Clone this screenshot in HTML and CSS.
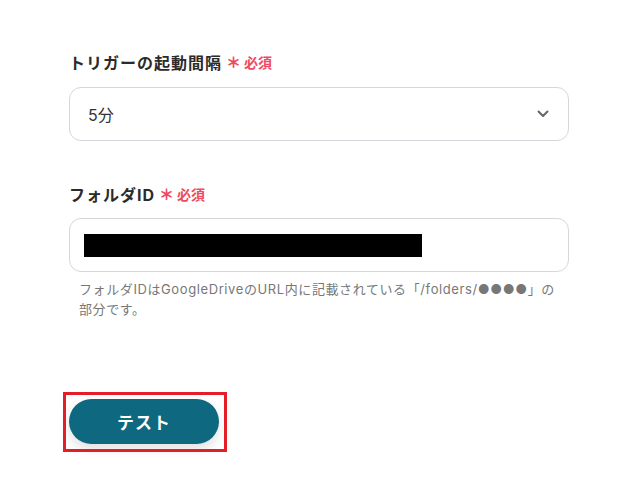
FILE: index.html
```html
<!DOCTYPE html>
<html lang="ja">
<head>
<meta charset="utf-8">
<link rel="stylesheet" href="styles.css">
</head>
<body>
<div class="form">
  <div class="field field-first">
    <div class="label">トリガーの起動間隔<span class="req"><span class="ast">＊</span>必須</span></div>
    <div class="select">
      <span class="value">5分</span>
      <svg class="chev" width="12" height="8" viewBox="0 0 12 8"><path d="M1.5 1.5 L6 6 L10.5 1.5" fill="none" stroke="#666" stroke-width="2" stroke-linecap="round" stroke-linejoin="round"/></svg>
    </div>
  </div>
  <div class="field field-second">
    <div class="label">フォルダID<span class="req"><span class="ast">＊</span>必須</span></div>
    <div class="input"><span class="redact"></span></div>
    <p class="help">フォルダIDはGoogleDriveのURL内に記載されている「/folders/●●●●」の部分です。</p>
  </div>
  <div class="actions">
    <div class="btn-wrap">
      <button class="btn">テスト</button>
    </div>
  </div>
</div>
</body>
</html>
```
FILE: styles.css
```css
html, body {
  margin: 0;
  padding: 0;
  background: #fff;
}
body {
  font-family: Inter, "Noto Sans CJK JP", sans-serif;
  color: #333;
  min-height: 496px;
}
.form {
  padding-left: 69px;
  width: 500px;
  padding-bottom: 40px;
}
.field-first {
  padding-top: 51px;
}
.field-second {
  padding-top: 42px;
}
.label {
  font-size: 16px;
  font-weight: 700;
  line-height: 24px;
  letter-spacing: 1px;
  color: #2b2b2b;
  margin-bottom: 12px;
  display: flex;
  align-items: center;
}
.req {
  color: #ee4b5f;
  font-size: 14px;
  letter-spacing: 0;
  margin-left: 4px;
  display: inline-flex;
  align-items: center;
}
.ast {
  font-size: 15px;
  font-weight: 900;
  margin-right: 3px;
}
.select, .input {
  box-sizing: border-box;
  height: 54px;
  border: 1px solid #d4d7dc;
  border-radius: 12px;
  display: flex;
  align-items: center;
}
.select {
  justify-content: space-between;
  padding: 0 19px 0 18px;
}
.value {
  font-size: 16px;
  color: #333;
}
.chev {
  display: block;
}
.input {
  padding-left: 14px;
  margin-top: -1px;
}
.redact {
  display: block;
  width: 338px;
  height: 23px;
  background: #000;
}
.help {
  margin: 7px 0 0;
  padding: 0 6px 0 10px;
  font-family: Inter, "Noto Sans CJK JP", sans-serif;
  font-size: 13px;
  line-height: 20px;
  letter-spacing: 0.6px;
  color: #777;
}
.actions {
  padding-top: 80px;
}
.btn-wrap {
  position: relative;
  width: 150px;
}
.btn-wrap::after {
  content: "";
  position: absolute;
  left: -6px;
  top: -7px;
  width: 158px;
  height: 54px;
  border: 3px solid #e41e26;
  pointer-events: none;
}
.btn {
  display: block;
  width: 150px;
  height: 45px;
  border: none;
  border-radius: 23px;
  background: #0d6880;
  color: #fff;
  font-family: Inter, "Noto Sans CJK JP", sans-serif;
  font-size: 17px;
  font-weight: 700;
  letter-spacing: 1px;
  box-shadow: 0 5px 12px rgba(0, 0, 0, 0.12);
  padding: 0;
}
```
